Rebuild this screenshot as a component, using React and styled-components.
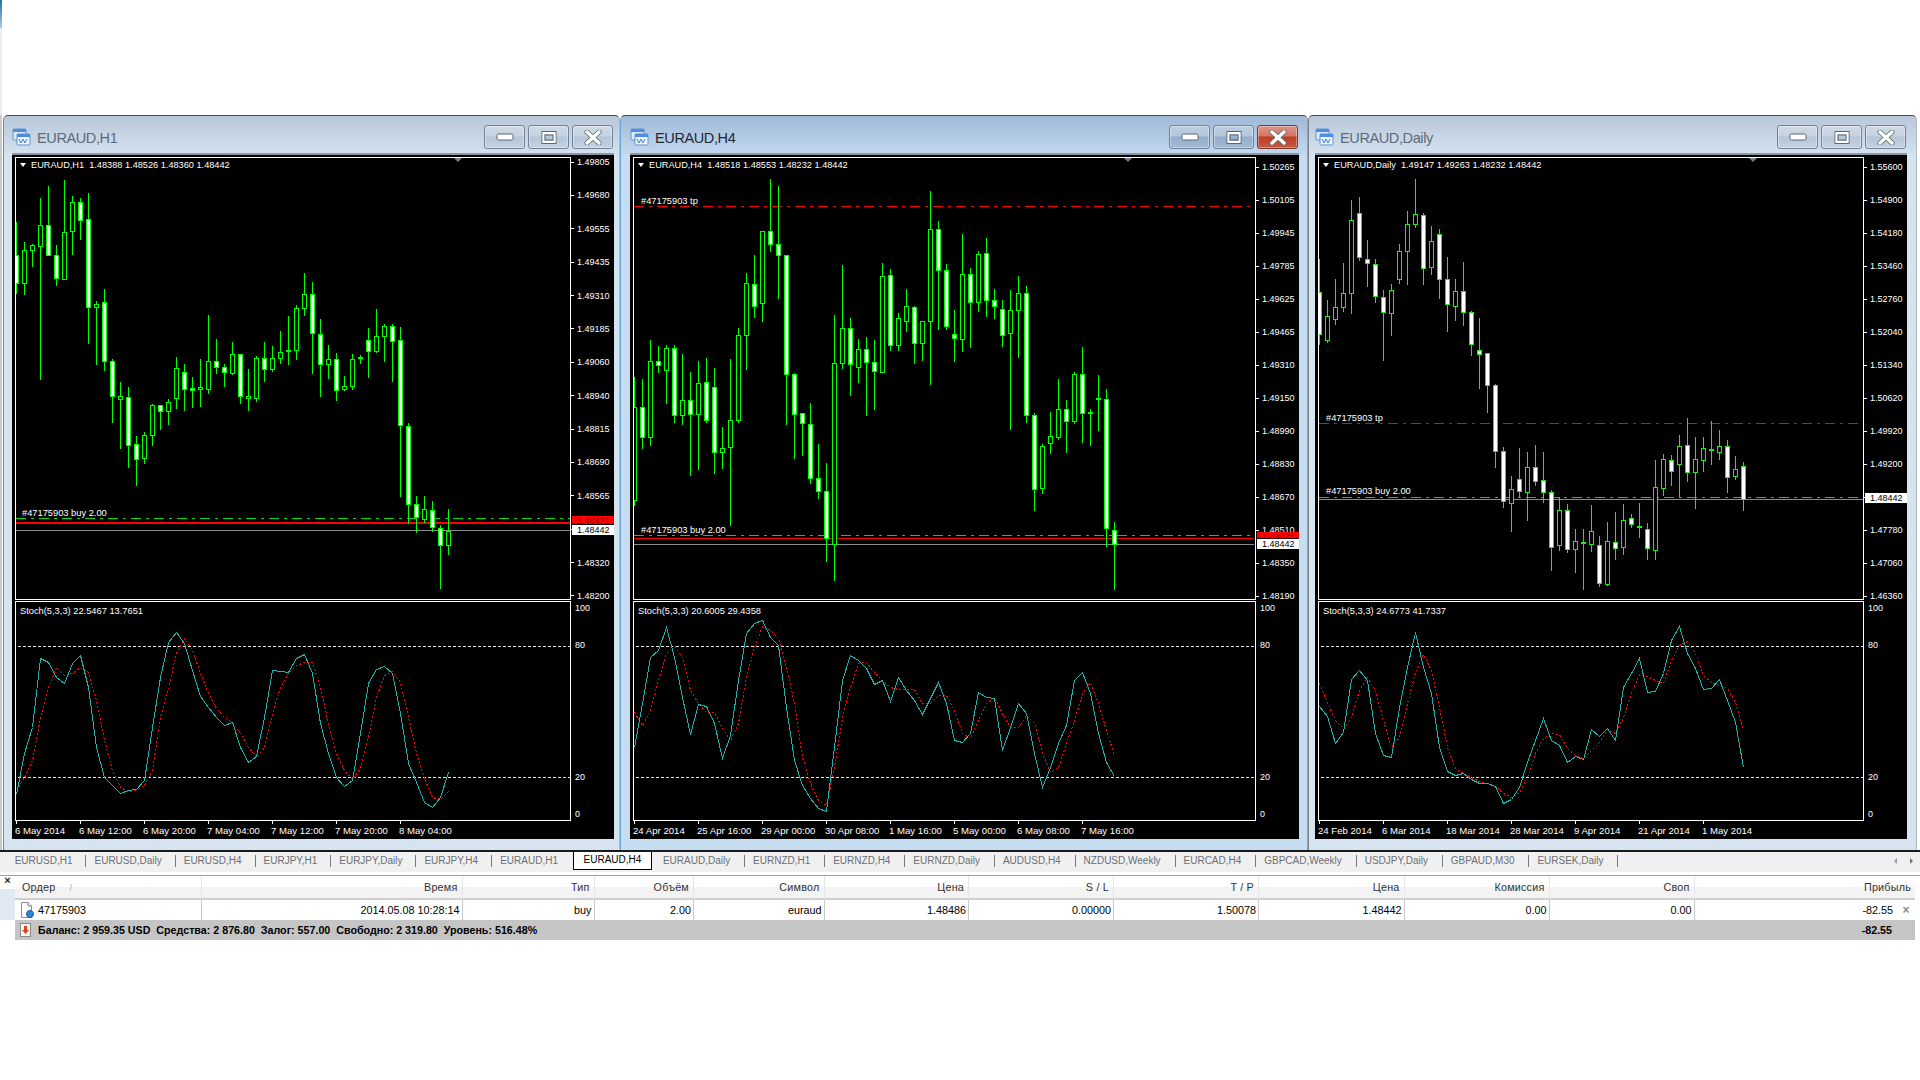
import React from 'react';
import styled, { createGlobalStyle } from 'styled-components';

const GlobalStyle = createGlobalStyle`
  html, body { margin: 0; padding: 0; background: #fff; }
  body { font-family: "Liberation Sans", Arial, sans-serif; width: 1920px; height: 1080px; overflow: hidden; }
`;

// candles: wick top, body top, body bottom, wick bottom, white body (1) or black (0)
// values are y * 3 from y=100, it was easier to read them off that way
const candlesH1 = [
  [363,466,549,578,1],[423,451,550,582,0],[430,436,449,498,0],[291,376,439,836,0],[255,376,466,466,1],
  [432,466,535,555,1],[237,397,536,538,0],[285,307,394,462,0],[291,307,361,417,1],[276,358,622,729,1],
  [600,613,622,792,0],[564,607,784,810,1],[775,784,889,966,1],[843,889,898,1043,0],[858,892,1036,1100,1],
  [1006,1033,1078,1155,1],[993,1006,1073,1089,0],[909,915,1006,1034,0],[915,916,932,987,1],[895,907,932,972,0],
  [768,805,895,923,0],[790,817,868,930,1],[828,865,869,921,1],[774,862,868,918,0],[642,784,868,879,0],
  [714,784,802,819,1],[790,802,817,858,1],[723,763,819,822,0],[760,763,889,908,1],[804,889,895,929,0],
  [766,775,895,902,0],[723,775,808,843,1],[735,775,808,813,0],[690,757,775,790,0],[645,751,754,792,1],
  [612,625,751,777,0],[516,583,625,645,0],[543,583,700,819,1],[654,703,793,888,1],[732,778,793,835,0],
  [756,778,871,900,1],[825,859,868,870,0],[759,778,857,867,0],[762,772,775,790,1],[681,721,754,831,1],
  [624,709,754,757,0],[669,679,709,783,0],[669,679,724,843,1],[678,721,976,1188,1],[966,979,1213,1270,1],
  [1185,1213,1250,1295,1],[1185,1228,1257,1265,0],[1200,1231,1280,1292,1],[1273,1283,1336,1464,1],[1224,1292,1336,1361,0],
];

const candlesH4 = [
  [828,922,1200,1215,0],[835,922,1012,1043,1],[717,784,1012,1034,0],[735,784,796,816,1],[732,745,811,909,0],
  [733,745,945,966,1],[760,901,945,972,0],[813,901,943,1126,1],[780,850,943,1107,0],[771,847,961,967,1],
  [801,862,1057,1119,1],[978,1043,1057,1104,0],[774,961,1042,1275,0],[681,706,961,966,0],[516,550,706,807,0],
  [462,553,619,650,1],[391,394,610,663,0],[234,394,433,453,1],[255,433,466,594,1],[466,466,823,972,1],
  [816,823,942,1074,1],[940,940,970,1065,1],[906,973,1135,1150,1],[1029,1135,1173,1195,1],[1086,1174,1313,1383,1],
  [642,790,1331,1439,0],[492,685,789,804,0],[651,685,793,885,1],[714,748,802,846,0],[708,748,787,945,1],
  [717,787,814,927,1],[486,529,815,817,0],[504,526,736,750,1],[636,655,736,750,0],[564,619,664,693,0],
  [615,622,730,789,1],[664,664,730,780,0],[270,388,664,852,0],[360,388,511,687,1],[489,511,679,687,1],
  [627,703,715,783,1],[399,523,718,753,0],[502,523,607,741,1],[450,463,607,633,0],[411,460,601,648,1],
  [564,601,619,654,1],[597,628,706,738,1],[568,631,700,987,0],[525,580,631,771,0],[555,580,946,966,1],
  [937,946,1168,1230,1],[1029,1039,1165,1178,0],[933,1009,1030,1060,0],[834,928,1010,1016,0],[897,928,964,1056,1],
  [813,823,964,970,0],[738,823,940,1027,1],[924,937,940,1035,1],[822,895,898,990,1],[864,898,1285,1337,1],
  [1263,1289,1332,1467,1],
];

const candlesDaily = [
  [474,575,703,732,1],[597,649,720,726,0],[534,622,656,672,0],[486,580,620,633,0],[297,361,580,639,0],
  [288,340,470,480,1],[417,476,490,558,1],[474,493,589,606,1],[567,592,637,780,1],[549,571,640,705,0],
  [429,454,537,549,0],[330,373,454,552,0],[234,343,373,381,0],[336,346,505,552,1],[375,424,502,522,0],
  [384,403,538,594,1],[468,538,613,693,1],[534,574,617,660,0],[483,574,637,675,1],[631,637,733,765,1],
  [651,751,763,864,1],[756,760,856,936,1],[850,856,1054,1100,1],[1038,1054,1202,1221,1],[1125,1168,1208,1293,0],
  [1041,1138,1174,1190,1],[1053,1102,1175,1260,0],[1032,1102,1144,1155,1],[1053,1141,1177,1206,1],[1168,1177,1342,1410,1],
  [1188,1231,1336,1350,0],[1209,1231,1346,1356,1],[1284,1324,1348,1416,0],[1284,1327,1330,1467,1],[1212,1294,1331,1353,0],
  [1305,1336,1448,1458,1],[1263,1324,1451,1455,0],[1233,1327,1345,1377,1],[1209,1261,1342,1362,0],[1239,1255,1273,1281,1],
  [1206,1278,1280,1311,1],[1266,1286,1345,1377,1],[1077,1162,1351,1377,0],[1059,1078,1165,1185,0],[1062,1081,1114,1155,1],
  [1002,1039,1093,1188,0],[951,1036,1117,1143,1],[1008,1078,1117,1224,0],[1008,1045,1081,1113,0],[960,1048,1051,1092,1],
  [987,1039,1057,1077,0],[1017,1039,1132,1176,1],[1065,1108,1129,1137,0],[1083,1099,1197,1230,1],
];

const stochH1 = {
  main: [1002,880,800,595,605,650,670,610,585,680,860,950,975,1000,990,988,960,800,650,545,517,550,630,708,740,770,795,785,860,906,887,770,631,633,635,595,583,640,790,880,950,979,960,820,670,628,619,640,760,910,965,1025,1040,1010,937],
  signal: [990,950,900,770,680,620,645,640,622,635,720,840,930,980,992,990,975,930,770,680,580,535,570,640,700,745,770,785,820,860,890,860,760,680,640,615,605,605,680,790,880,930,958,925,830,710,645,632,665,770,880,955,1010,1017,993],
};

const stochH4 = {
  main: [770,640,500,480,412,500,620,733,643,647,700,805,735,570,428,400,391,440,465,650,810,885,925,955,962,770,570,494,510,535,583,570,633,560,600,630,673,625,575,640,750,757,730,607,622,625,780,710,640,670,790,892,830,760,705,570,545,610,730,815,857],
  signal: [665,705,660,570,490,466,500,600,640,665,665,715,750,700,560,470,408,420,445,530,640,800,880,930,945,830,680,590,520,517,545,570,590,597,598,598,640,640,615,615,660,730,745,690,640,620,670,710,712,675,700,790,845,830,760,690,610,575,640,720,795],
};

const stochDaily = {
  main: [648,677,760,725,568,541,570,730,795,800,650,530,427,530,610,770,843,855,850,868,878,878,888,938,928,890,815,750,685,750,765,816,798,808,716,737,715,750,590,550,505,607,604,550,450,409,490,535,598,595,567,630,695,830],
  signal: [580,635,690,715,680,600,562,600,690,770,740,640,545,493,540,650,770,835,850,860,873,878,888,908,920,905,860,790,745,730,732,775,795,805,780,755,718,730,680,610,552,557,570,580,510,465,452,490,555,575,585,595,635,720],
};

const windows = [
  {
    title: 'EURAUD,H1',
    width: 617, padLeft: 8, padRight: 5, plotWidth: 554,
    ohlc: '1.48388 1.48526 1.48360 1.48442',
    candles: candlesH1,
    stoch: stochH1, stochOffset: 142,
    stochLabel: 'Stoch(5,3,3) 22.5467 13.7651',
    prices: ['1.49805','1.49680','1.49555','1.49435','1.49310','1.49185','1.49060','1.48940','1.48815','1.48690','1.48565','1.48440','1.48320','1.48200'],
    axisTop: 1,
    shiftAt: 438,
    lines: { buy: 360, sl: 364, slWidth: 2, bid: 372 },
    labels: [{ text: '#47175903 buy 2.00', left: 6, top: 350 }],
    redTag: { top: 359, height: 8, text: '1.48471' },
    whiteTop: 368,
    times: ['6 May 2014','6 May 12:00','6 May 20:00','7 May 04:00','7 May 12:00','7 May 20:00','8 May 04:00'],
  },
  {
    title: 'EURAUD,H4',
    active: true,
    width: 688, padLeft: 9, padRight: 8, plotWidth: 620,
    ohlc: '1.48518 1.48553 1.48232 1.48442',
    candles: candlesH4,
    stoch: stochH4, stochOffset: 112,
    stochLabel: 'Stoch(5,3,3) 20.6005 29.4358',
    prices: ['1.50265','1.50105','1.49945','1.49785','1.49625','1.49465','1.49310','1.49150','1.48990','1.48830','1.48670','1.48510','1.48350','1.48190'],
    axisTop: 6,
    shiftAt: 490,
    lines: { tp: 48, buy: 377, sl: 380, slWidth: 1, bid: 386 },
    labels: [
      { text: '#47175903 tp', left: 7, top: 38 },
      { text: '#47175903 buy 2.00', left: 7, top: 367 },
    ],
    redTag: { top: 375, height: 6, text: '1.48471' },
    whiteTop: 382,
    times: ['24 Apr 2014','25 Apr 16:00','29 Apr 00:00','30 Apr 08:00','1 May 16:00','5 May 00:00','6 May 08:00','7 May 16:00'],
  },
  {
    title: 'EURAUD,Daily',
    width: 609, padLeft: 6, padRight: 9, plotWidth: 544,
    ohlc: '1.49147 1.49263 1.48232 1.48442',
    candles: candlesDaily,
    stoch: stochDaily, stochOffset: 112,
    stochLabel: 'Stoch(5,3,3) 24.6773 41.7337',
    prices: ['1.55600','1.54900','1.54180','1.53460','1.52760','1.52040','1.51340','1.50620','1.49920','1.49200','1.48480','1.47780','1.47060','1.46360'],
    axisTop: 6,
    shiftAt: 430,
    lines: { tp: 265, buy: 339, bid: 341 },
    labels: [
      { text: '#47175903 tp', left: 7, top: 255 },
      { text: '#47175903 buy 2.00', left: 7, top: 328 },
    ],
    whiteTop: 336,
    times: ['24 Feb 2014','6 Mar 2014','18 Mar 2014','28 Mar 2014','9 Apr 2014','21 Apr 2014','1 May 2014'],
  },
];

const tabs = [
  'EURUSD,H1','EURUSD,Daily','EURUSD,H4','EURJPY,H1','EURJPY,Daily','EURJPY,H4','EURAUD,H1','EURAUD,H4',
  'EURAUD,Daily','EURNZD,H1','EURNZD,H4','EURNZD,Daily','AUDUSD,H4','NZDUSD,Weekly','EURCAD,H4','GBPCAD,Weekly',
  'USDJPY,Daily','GBPAUD,M30','EURSEK,Daily',
];

const columns = [
  { title: 'Ордер', value: '47175903' },
  { title: 'Время', value: '2014.05.08 10:28:14' },
  { title: 'Тип', value: 'buy' },
  { title: 'Объём', value: '2.00' },
  { title: 'Символ', value: 'euraud' },
  { title: 'Цена', value: '1.48486' },
  { title: 'S / L', value: '0.00000' },
  { title: 'T / P', value: '1.50078' },
  { title: 'Цена', value: '1.48442' },
  { title: 'Комиссия', value: '0.00' },
  { title: 'Своп', value: '0.00' },
  { title: 'Прибыль', value: '-82.55' },
];

const COLS = '187px 260.5px 132px 99.5px 130.5px 144.5px 145px 145px 145.5px 145px 145px 1fr';

const Page = styled('div')`
  width: 1920px;
  height: 1080px;
  background: #fff;
  display: flex;
  flex-direction: column;
`;

const TopSpace = styled('div')`
  height: 115px;
  width: 2px;
  background: linear-gradient(#1f6fa8 0, #a9cdf0 28px, #ececec 28px);
`;

const WindowRow = styled('div')`
  height: 735px;
  display: flex;
  padding-left: 3px;
  background: linear-gradient(90deg, #c9c9c9 2px, #fff 2px);
`;

const Window = styled('section')`
  box-sizing: border-box;
  width: ${p => p.$width}px;
  height: 735px;
  padding: 0 ${p => p.$padRight}px 0 ${p => p.$padLeft}px;
  border-top: 1px solid #4a4a4a;
  border-left: 1px solid ${p => p.$active ? '#6fa9d8' : '#7f8589'};
  border-right: 1px solid ${p => p.$active ? '#6fa9d8' : '#aab8c4'};
  border-radius: 5px 5px 0 0;
  background: ${p => p.$active
    ? 'linear-gradient(#a0b9d6 0, #c2d8ef 38px, #c5dcf1 38px)'
    : 'linear-gradient(#b8c8d8 0, #d4e1ef 38px, #d6e4f1 38px)'};
`;

const TitleBar = styled('header')`
  height: 37px;
  box-sizing: border-box;
  padding-top: 5px;
  display: flex;
  align-items: center;
  gap: 6px;
`;

const TitleText = styled('span')`
  font-size: 14.5px;
  letter-spacing: -.38px;
  padding-top: 1px;
  color: ${p => p.$active ? '#1e2a36' : '#5c6b7a'};
`;

const Buttons = styled('div')`
  margin-left: auto;
  margin-right: 1px;
  display: flex;
  gap: 3px;
`;

const WinButton = styled('button')`
  width: 41px;
  height: 24px;
  padding: 0;
  display: flex;
  align-items: center;
  justify-content: center;
  border: 1px solid ${p => p.$close ? '#7a3a30' : '#6f8499'};
  border-radius: 3px;
  background: ${p => {
    if (p.$close) return 'linear-gradient(#dd9385 0, #d37766 45%, #bd3f27 50%, #c65a3f 100%)';
    if (p.$active) return 'linear-gradient(#bccde0 0, #b4c7dc 45%, #93aecc 50%, #a3bbd5 100%)';
    return 'linear-gradient(#cfdae6 0, #c5d2e0 45%, #b6c6d7 50%, #c3d1e0 100%)';
  }};
  box-shadow: inset 0 0 0 1px rgba(255, 255, 255, .35);
`;

const Chart = styled('div')`
  box-sizing: border-box;
  height: 686px;
  border-top: 2px solid #8d979f;
  padding: 2px 0 0 3px;
  background: #000;
  display: grid;
  grid-template-columns: 1fr 43px;
  grid-template-rows: 443px 221px 18px;
`;

const Plot = styled('div')`
  box-sizing: border-box;
  position: relative;
  border: 1px solid #fff;
  overflow: hidden;
  height: ${p => p.$height}px;
  margin-top: ${p => p.$offset || 0}px;
`;

const PriceAxis = styled('div')`
  position: relative;
  display: flex;
  flex-direction: column;
  justify-content: space-between;
  padding-top: ${p => p.$top}px;
  box-sizing: border-box;
  height: 443px;
  color: #fff;
  font-size: 9px;
`;

const PriceLabel = styled('div')`
  display: flex;
  align-items: center;
  height: 8px;
  line-height: 8px;
  &::before {
    content: '';
    width: 3px;
    height: 1px;
    margin-right: 3px;
    background: #fff;
  }
`;

const SubAxis = styled('div')`
  display: grid;
  grid-template-rows: 37px 131.5px 37.5px auto;
  box-sizing: border-box;
  padding: 3px 0 0 4px;
  color: #fff;
  font-size: 9px;
  line-height: 10px;
`;

const PriceTag = styled('div')`
  position: absolute;
  left: 1px;
  right: 0;
  top: ${p => p.$top}px;
  height: ${p => p.$height}px;
  line-height: 10px;
  padding-left: 5px;
  font-size: 9px;
  background: ${p => p.$red ? '#ff0000' : '#fff'};
  color: ${p => p.$red ? '#a30000' : '#000'};
`;

const TimeAxis = styled('div')`
  grid-column: 1 / 3;
  display: flex;
  color: #fff;
  font-size: 9.6px;
  white-space: nowrap;
`;

const TimeLabel = styled('div')`
  width: 64px;
  flex: none;
  line-height: 14px;
  &::before {
    content: '';
    display: block;
    width: 1px;
    height: 3px;
    margin-left: 1px;
    background: #fff;
  }
`;

const Legend = styled('div')`
  position: absolute;
  left: 4px;
  top: 2px;
  display: flex;
  align-items: center;
  gap: 5px;
  color: #fff;
  font-size: 9.2px;
  line-height: 10px;
  white-space: pre;
`;

const LegendArrow = styled('i')`
  width: 0;
  height: 0;
  border-left: 3px solid transparent;
  border-right: 3px solid transparent;
  border-top: 4px solid #fff;
`;

const ShiftMark = styled('i')`
  position: absolute;
  left: ${p => p.$left}px;
  top: 0;
  width: 0;
  height: 0;
  border-left: 4px solid transparent;
  border-right: 4px solid transparent;
  border-top: 4px solid #6f7f8f;
`;

const OrderLabel = styled('span')`
  position: absolute;
  left: ${p => p.$left}px;
  top: ${p => p.$top}px;
  color: #fff;
  font-size: 9.3px;
  line-height: 10px;
  white-space: nowrap;
`;

const PlotSvg = styled('svg')`
  display: block;
  shape-rendering: crispEdges;
`;

const TabStrip = styled('nav')`
  box-sizing: border-box;
  height: 22px;
  border-top: 2px solid #1a1a1a;
  padding-left: 6.7px;
  display: flex;
  align-items: flex-start;
  background: #f0f0f0;
  font-size: 10px;
  color: #6a6f75;
  white-space: nowrap;
`;

const Tab = styled('div')`
  box-sizing: border-box;
  padding: 0 ${p => p.$wide ? 13.9 : 13}px 0 8px;
  margin-top: 3px;
  height: 12px;
  line-height: 12px;
  border-right: 1px solid ${p => p.$plain ? 'transparent' : '#7a7a7a'};
`;

const ActiveTab = styled('div')`
  box-sizing: border-box;
  width: 79px;
  height: 18px;
  line-height: 16px;
  text-align: center;
  margin-left: 1px;
  margin-right: 3px;
  background: #fff;
  border: 1px solid #000;
  border-top: 0;
  color: #000;
`;

const ScrollArrows = styled('div')`
  margin-left: auto;
  margin-right: 7px;
  margin-top: 6px;
  display: flex;
  gap: 13px;
`;

const ScrollArrow = styled('i')`
  width: 0;
  height: 0;
  border-top: 3px solid transparent;
  border-bottom: 3px solid transparent;
  ${p => p.$right ? 'border-left: 3px solid #777;' : 'border-right: 3px solid #999;'}
`;

const Terminal = styled('div')`
  margin-top: 3px;
  border-top: 1px solid #a0a0a0;
  display: flex;
`;

const Rail = styled('div')`
  width: 15px;
  flex: none;
  display: flex;
  flex-direction: column;
`;

const RailClose = styled('div')`
  height: 13px;
  line-height: 9px;
  text-align: center;
  font-size: 11px;
  font-weight: bold;
  color: #222;
`;

const RailFill = styled('div')`
  height: 31px;
  background: #e0e9f2;
`;

const Orders = styled('div')`
  width: 1900px;
  font-size: 10.8px;
  color: #000;
`;

const HeadRow = styled('div')`
  display: grid;
  grid-template-columns: ${COLS};
  height: 24px;
  box-sizing: border-box;
  border-bottom: 2px solid #cfcfcf;
  background: linear-gradient(#fff 50%, #f3f3f3 50%);
  color: #333;
`;

const HeadCell = styled('div')`
  box-sizing: border-box;
  line-height: 22px;
  text-align: ${p => p.$left ? 'left' : 'right'};
  padding: ${p => p.$left ? '0 0 0 7px' : '0 4px 0 0'};
  border-right: 1px solid #e6e6e6;
  letter-spacing: .2px;
  &:last-child { border-right: 0; }
`;

const SortMark = styled('span')`
  margin-left: 14px;
  color: #aaa;
  font-size: 9px;
`;

const OrderRow = styled('div')`
  display: grid;
  grid-template-columns: ${COLS};
  height: 20px;
  background: #fff;
`;

const OrderCell = styled('div')`
  box-sizing: border-box;
  display: flex;
  align-items: center;
  justify-content: ${p => p.$left ? 'flex-start' : 'flex-end'};
  gap: 4px;
  padding: ${p => p.$left ? '0 0 0 5px' : '0 2px 0 0'};
  border-right: 1px solid #c9c9c9;
  &:last-child { border-right: 0; padding-right: 0; }
`;

const RemoveMark = styled('span')`
  width: 18px;
  text-align: center;
  color: #8a8a8a;
  font-weight: bold;
  font-size: 12px;
`;

const Summary = styled('div')`
  height: 20px;
  display: flex;
  align-items: center;
  gap: 7px;
  padding-left: 5px;
  background: #c5c5c5;
  font-weight: bold;
  font-size: 10.7px;
  white-space: pre;
`;

const SummaryProfit = styled('span')`
  margin-left: auto;
  margin-right: 23px;
`;

const WindowIcon = () => (
  <svg width="19" height="18" viewBox="0 0 19 18">
    <rect x="1" y="1" width="13" height="11" rx="1" fill="#dce9f9" stroke="#5f93d2" />
    <rect x="1" y="1" width="13" height="3" fill="#4f8dde" />
    <rect x="5" y="6" width="13" height="11" rx="1" fill="#eef5fd" stroke="#5f93d2" />
    <rect x="5" y="6" width="13" height="3" fill="#4f8dde" />
    <polyline points="7,11 9,15 11,11 13,15 15,11" fill="none" stroke="#3c7fc8" />
  </svg>
);

const MinIcon = () => (
  <svg width="18" height="8" viewBox="0 0 18 8">
    <rect x="1" y="1" width="16" height="6" rx="1.5" fill="#fff" stroke="#5b6670" />
  </svg>
);

const MaxIcon = () => (
  <svg width="18" height="15" viewBox="0 0 18 15">
    <rect x="2" y="1.5" width="14" height="12" fill="none" stroke="#5b6670" />
    <rect x="3.5" y="3" width="11" height="9" fill="none" stroke="#fff" strokeWidth="2" />
    <rect x="5" y="5" width="8" height="5" fill="none" stroke="#5b6670" />
  </svg>
);

const CloseIcon = () => (
  <svg width="18" height="15" viewBox="0 0 18 15">
    <path d="M3 2 L15 13 M15 2 L3 13" stroke="#5b6670" strokeWidth="5" strokeLinecap="round" />
    <path d="M3 2 L15 13 M15 2 L3 13" stroke="#fff" strokeWidth="3.4" strokeLinecap="round" />
  </svg>
);

const OrderIcon = () => (
  <svg width="14" height="16" viewBox="0 0 14 16">
    <path d="M1.5 .5 H8 L11.5 4 V15.5 H1.5 Z" fill="#fff" stroke="#8a8a8a" />
    <path d="M8 .5 V4 H11.5" fill="#e8e8e8" stroke="#8a8a8a" />
    <circle cx="10" cy="12" r="3.5" fill="#2f86d6" stroke="#1b5fa3" />
  </svg>
);

const LossIcon = () => (
  <svg width="11" height="14" viewBox="0 0 11 14">
    <rect x=".5" y=".5" width="10" height="13" fill="#f4f4f4" stroke="#8a8a8a" />
    <path d="M4 3 H7 V7 H9 L5.5 11 L2 7 H4 Z" fill="#d8431e" />
  </svg>
);

const round = v => Math.round(v) + .5;

const toPoints = (values, offset) =>
  values.map((v, i) => `${i * 8 + .5},${round(v / 3 - offset)}`).join(' ');

const PriceChart = ({ win }) => {
  const w = win.plotWidth;
  const { tp, buy, sl, slWidth, bid } = win.lines;
  return (
    <PlotSvg width={w} height={441}>
      {tp && <line x1="0" x2={w} y1={tp + .5} y2={tp + .5} stroke="#ff0000" strokeDasharray="10 5 3 5" />}
      <line x1="0" x2={w} y1={buy + .5} y2={buy + .5} stroke="#00dc00" strokeDasharray="10 5 3 5" />
      {sl && <line x1="0" x2={w} y1={sl + slWidth / 2} y2={sl + slWidth / 2} stroke="#ff0000" strokeWidth={slWidth} />}
      <line x1="0" x2={w} y1={bid + .5} y2={bid + .5} stroke="#8c8c8c" />
      {win.candles.map((c, i) => {
        const x = i * 8 + .5;
        const [wickTop, bodyTop, bodyBottom, wickBottom, white] = c;
        const top = round(bodyTop / 3 - 58);
        const bottom = round(bodyBottom / 3 - 58);
        return (
          <g key={i}>
            <line x1={x} x2={x} y1={round(wickTop / 3 - 58)} y2={round(wickBottom / 3 - 58)} stroke="#00ff00" />
            <rect x={x - 2} y={top} width="4" height={Math.max(bottom - top, 1)} fill={white ? '#fff' : '#000'} stroke="#00ff00" />
          </g>
        );
      })}
    </PlotSvg>
  );
};

const StochChart = ({ win }) => (
  <PlotSvg width={win.plotWidth} height={218}>
    <line x1="2" x2={win.plotWidth} y1="44.5" y2="44.5" stroke="#e8e8e8" strokeDasharray="3 2" />
    <line x1="2" x2={win.plotWidth} y1="175.5" y2="175.5" stroke="#e8e8e8" strokeDasharray="3 2" />
    <polyline points={toPoints(win.stoch.signal, win.stochOffset)} fill="none" stroke="#ff0000" strokeDasharray="2 2" />
    <polyline points={toPoints(win.stoch.main, win.stochOffset)} fill="none" stroke="#20b2aa" />
  </PlotSvg>
);

const ChartWindow = ({ win }) => (
  <Window $width={win.width} $padLeft={win.padLeft} $padRight={win.padRight} $active={win.active}>
    <TitleBar>
      <WindowIcon />
      <TitleText $active={win.active}>{win.title}</TitleText>
      <Buttons>
        <WinButton $active={win.active}><MinIcon /></WinButton>
        <WinButton $active={win.active}><MaxIcon /></WinButton>
        <WinButton $active={win.active} $close={win.active}><CloseIcon /></WinButton>
      </Buttons>
    </TitleBar>
    <Chart>
      <Plot $height={443}>
        <PriceChart win={win} />
        <Legend>
          <LegendArrow />
          <span>{win.title}  {win.ohlc}</span>
        </Legend>
        <ShiftMark $left={win.shiftAt} />
        {win.labels.map(l => (
          <OrderLabel key={l.text} $left={l.left} $top={l.top}>{l.text}</OrderLabel>
        ))}
      </Plot>
      <PriceAxis $top={win.axisTop}>
        {win.prices.map(p => <PriceLabel key={p}>{p}</PriceLabel>)}
        {win.redTag && <PriceTag $red $top={win.redTag.top} $height={win.redTag.height}>{win.redTag.text}</PriceTag>}
        <PriceTag $top={win.whiteTop} $height={10}>1.48442</PriceTag>
      </PriceAxis>
      <Plot $height={220} $offset={1}>
        <StochChart win={win} />
        <OrderLabel $left={4} $top={4}>{win.stochLabel}</OrderLabel>
      </Plot>
      <SubAxis>
        <span>100</span>
        <span>80</span>
        <span>20</span>
        <span>0</span>
      </SubAxis>
      <TimeAxis>
        {win.times.map(t => <TimeLabel key={t}>{t}</TimeLabel>)}
      </TimeAxis>
    </Chart>
  </Window>
);

const App = () => {
  const activeAt = tabs.indexOf('EURAUD,H4');
  return (
    <Page>
      <GlobalStyle />
      <TopSpace />
      <WindowRow>
        {windows.map(w => <ChartWindow key={w.title} win={w} />)}
      </WindowRow>
      <TabStrip>
        {tabs.map((t, i) => {
          if (i === activeAt) return <ActiveTab key={t}>{t}</ActiveTab>;
          return <Tab key={t} $plain={i === activeAt - 1} $wide={i > activeAt}>{t}</Tab>;
        })}
        <ScrollArrows>
          <ScrollArrow />
          <ScrollArrow $right />
        </ScrollArrows>
      </TabStrip>
      <Terminal>
        <Rail>
          <RailClose>×</RailClose>
          <RailFill />
        </Rail>
        <Orders>
          <HeadRow>
            {columns.map((c, i) => (
              <HeadCell key={i} $left={i === 0}>
                {c.title}
                {i === 0 && <SortMark>/</SortMark>}
              </HeadCell>
            ))}
          </HeadRow>
          <OrderRow>
            {columns.map((c, i) => (
              <OrderCell key={i} $left={i === 0}>
                {i === 0 && <OrderIcon />}
                {c.value}
                {i === columns.length - 1 && <RemoveMark>×</RemoveMark>}
              </OrderCell>
            ))}
          </OrderRow>
          <Summary>
            <LossIcon />
            <span>Баланс: 2 959.35 USD  Средства: 2 876.80  Залог: 557.00  Свободно: 2 319.80  Уровень: 516.48%</span>
            <SummaryProfit>-82.55</SummaryProfit>
          </Summary>
        </Orders>
      </Terminal>
    </Page>
  );
};

export default App;
